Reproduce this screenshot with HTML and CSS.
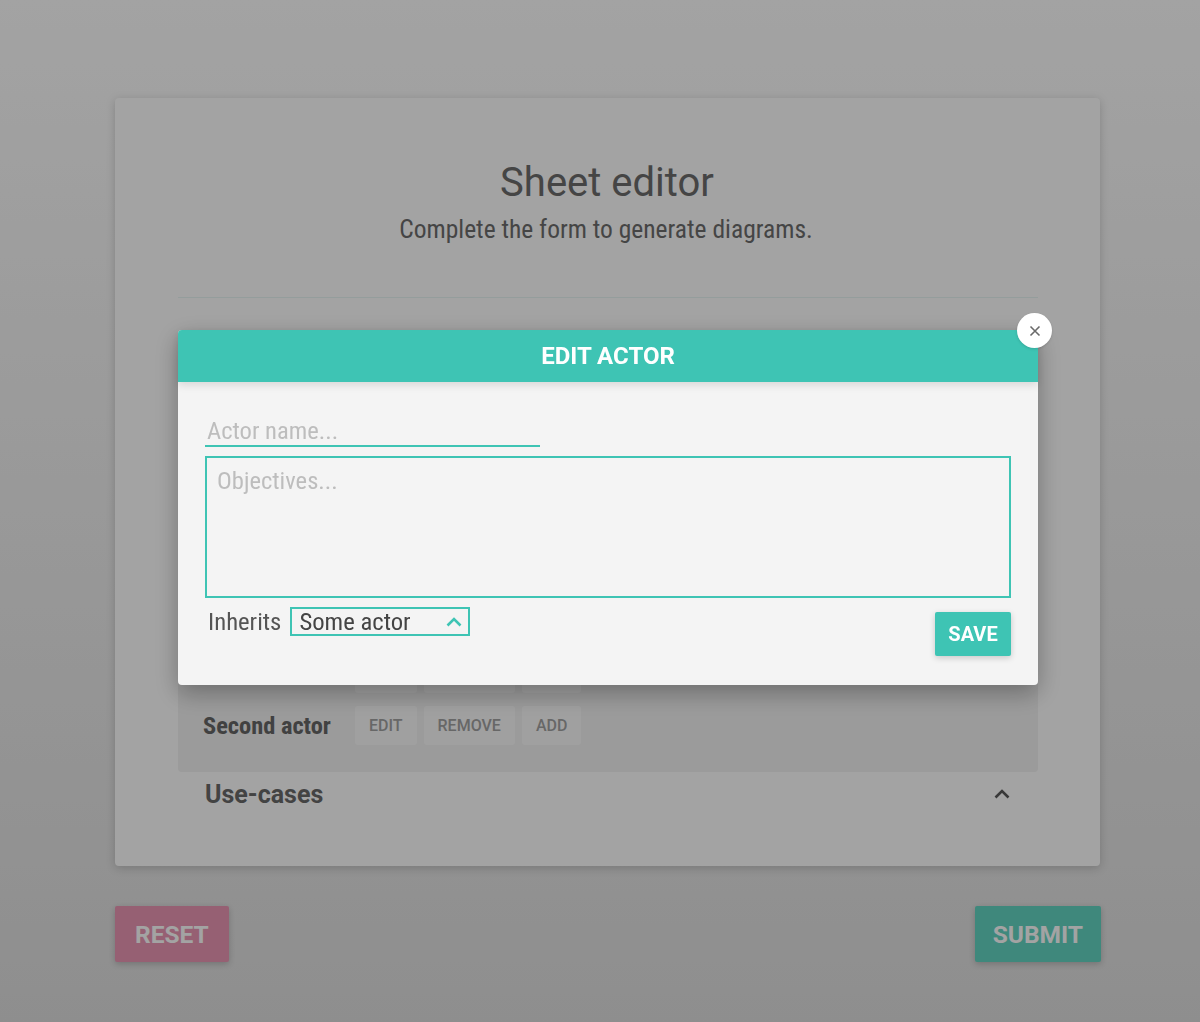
FILE: index.html
```html
<!DOCTYPE html>
<html lang="en">
<head>
<meta charset="utf-8">
<title>Sheet editor</title>
<link rel="stylesheet" href="styles.css">
</head>
<body>
<div class="page">
  <main class="card">
    <header class="card-head">
      <h1 class="title">Sheet editor</h1>
      <p class="subtitle">Complete the form to generate diagrams.</p>
    </header>
    <hr class="divider">
    <section class="general">
      <input class="line-input" placeholder="Sheet title...">
      <input class="line-input" placeholder="Author...">
    </section>
    <div class="acc-head">
      <span class="acc-title">Actors</span>
      <svg class="acc-chevron" width="16" height="10" viewBox="0 0 16 10"><polyline points="1.5,8.5 8,2 14.5,8.5" fill="none" stroke="currentColor" stroke-width="2.6"/></svg>
    </div>
    <div class="acc-panel">
      <div class="actor-row">
        <span class="actor-name">First actor</span>
        <button class="chip">EDIT</button><button class="chip">REMOVE</button><button class="chip">ADD</button>
      </div>
      <div class="actor-row">
        <span class="actor-name">Second actor</span>
        <button class="chip">EDIT</button><button class="chip">REMOVE</button><button class="chip">ADD</button>
      </div>
    </div>
    <div class="acc-head acc-last">
      <span class="acc-title">Use-cases</span>
      <svg class="acc-chevron" width="16" height="10" viewBox="0 0 16 10"><polyline points="1.5,8.5 8,2 14.5,8.5" fill="none" stroke="currentColor" stroke-width="2.6"/></svg>
    </div>
  </main>
  <div class="actions">
    <button class="big-btn btn-reset">RESET</button>
    <button class="big-btn btn-submit">SUBMIT</button>
  </div>
</div>

<div class="overlay"></div>

<div class="modal">
  <button class="modal-close" aria-label="Close">
    <svg width="12" height="12" viewBox="0 0 12 12"><path d="M1.5 1.5 L10.5 10.5 M10.5 1.5 L1.5 10.5" stroke="#6a6a6a" stroke-width="1.6" fill="none"/></svg>
  </button>
  <div class="modal-head">EDIT ACTOR</div>
  <div class="modal-body">
    <input class="name-input" placeholder="Actor name...">
    <textarea class="obj-input" placeholder="Objectives..."></textarea>
    <div class="modal-foot">
      <div class="inherits">
        <span class="inherits-label">Inherits</span>
        <div class="select">
          <span class="select-value">Some actor</span>
          <svg class="select-chevron" width="16" height="10" viewBox="0 0 16 10"><polyline points="1.5,8.5 8,2 14.5,8.5" fill="none" stroke="#3ec4b4" stroke-width="2.6"/></svg>
        </div>
      </div>
      <button class="save-btn">SAVE</button>
    </div>
  </div>
</div>
</body>
</html>
```

FILE: styles.css
```css
* { box-sizing: border-box; }

html, body {
  margin: 0;
  padding: 0;
}

body {
  min-height: 1022px;
  background: linear-gradient(to bottom, #ffffff 0%, #dfdfdf 100%);
  font-family: Roboto, "Noto Sans", sans-serif;
  color: #6b6b6b;
}

.page {
  padding-top: 98px;
  padding-bottom: 60px;
}

.card {
  margin-left: 115px;
  width: 985px;
  background: #ffffff;
  border-radius: 4px;
  box-shadow: 0 2px 10px rgba(0, 0, 0, 0.18);
  padding: 61px 62px 50px 63px;
}

.card-head {
  text-align: center;
}

.title {
  margin: 0;
  font-size: 40px;
  line-height: 48px;
  font-weight: 400;
  color: #6d6d6d;
  padding-right: 2px;
}

.subtitle {
  margin: 7px 0 0;
  font-family: "Roboto Condensed", "Liberation Sans Narrow", Roboto, sans-serif;
  font-stretch: condensed;
  font-size: 25.5px;
  line-height: 30px;
  color: #6d6d6d;
  padding-right: 4px;
}

.divider {
  margin: 53px 0 0;
  border: 0;
  height: 1px;
  background: #e8f6f4;
}

.general {
  height: 202px;
  padding: 40px 27px;
  display: flex;
  flex-direction: column;
  gap: 30px;
}

.line-input {
  height: 46px;
  width: 335px;
  border: 0;
  border-bottom: 2px solid #3ec4b4;
  background: transparent;
  font-family: "Roboto Condensed", "Liberation Sans Narrow", Roboto, sans-serif;
  font-size: 24px;
  color: #555;
  outline: none;
}

.acc-head {
  height: 50px;
  padding: 0 28px 0 27px;
  display: flex;
  align-items: center;
  justify-content: space-between;
  color: #6a6a6a;
}

.acc-last {
  height: 44px;
}

.acc-title {
  font-size: 25px;
  font-weight: 700;
  color: #6a6a6a;
}

.acc-chevron {
  color: #5a5a5a;
}

.acc-panel {
  background: #f2f2f2;
  border-radius: 0 0 4px 4px;
  padding: 104px 25px 27px;
  display: flex;
  flex-direction: column;
  gap: 13px;
}

.actor-row {
  display: flex;
  align-items: center;
  gap: 7px;
  height: 39px;
}

.actor-name {
  width: 145px;
  font-family: "Roboto Condensed", "Liberation Sans Narrow", Roboto, sans-serif;
  font-stretch: condensed;
  font-weight: 700;
  font-size: 24.4px;
  color: #666;
}

.chip {
  height: 39px;
  padding: 0 14px;
  border: 0;
  border-radius: 3px;
  background: #fbfbfb;
  font-family: Roboto, sans-serif;
  font-weight: 500;
  font-size: 16px;
  color: #a2a2a2;
}

.actions {
  margin: 40px 0 0 115px;
  width: 986px;
  display: flex;
  justify-content: space-between;
}

.big-btn {
  height: 56px;
  border: 0;
  border-radius: 2px;
  padding: 0 20px;
  font-family: Roboto, sans-serif;
  font-weight: 700;
  font-size: 24.5px;
  color: #ffffff;
  box-shadow: 0 2px 6px rgba(0, 0, 0, 0.2);
}

.btn-reset {
  background: #eb96b4;
}

.btn-submit {
  background: #63d5c3;
  padding: 0 18px;
}

.overlay {
  position: fixed;
  inset: 0;
  background: rgba(0, 0, 0, 0.36);
  z-index: 10;
}

.modal {
  position: fixed;
  left: 178px;
  top: 330px;
  width: 860px;
  background: #f4f4f4;
  border-radius: 4px;
  box-shadow: 0 8px 24px rgba(0, 0, 0, 0.3);
  z-index: 20;
}

.modal-close {
  position: absolute;
  top: -17px;
  right: -14px;
  width: 35px;
  height: 35px;
  border-radius: 50%;
  border: 0;
  background: #ffffff;
  display: flex;
  align-items: center;
  justify-content: center;
  padding: 0;
  box-shadow: 0 1px 3px rgba(0, 0, 0, 0.15);
  z-index: 2;
}

.modal-head {
  height: 52px;
  background: #3ec4b4;
  border-radius: 4px 4px 0 0;
  color: #ffffff;
  font-size: 24px;
  font-weight: 700;
  display: flex;
  align-items: center;
  justify-content: center;
  box-shadow: 0 3px 8px rgba(0, 0, 0, 0.12);
  position: relative;
  z-index: 1;
}

.modal-body {
  padding: 33px 27px 29px;
}

.name-input {
  display: block;
  width: 335px;
  height: 32px;
  border: 0;
  border-bottom: 2px solid #3ec4b4;
  background: transparent;
  padding: 0 2px;
  font-family: "Roboto Condensed", "Liberation Sans Narrow", Roboto, sans-serif;
  font-stretch: condensed;
  font-size: 24.6px;
  color: #444;
  outline: none;
}

.name-input::placeholder,
.obj-input::placeholder {
  color: #bdbdbd;
}

.obj-input {
  display: block;
  margin-top: 9px;
  width: 100%;
  height: 142px;
  border: 2px solid #3ec4b4;
  background: transparent;
  padding: 8px 10px;
  resize: none;
  font-family: "Roboto Condensed", "Liberation Sans Narrow", Roboto, sans-serif;
  font-stretch: condensed;
  font-size: 24.6px;
  line-height: 30px;
  color: #444;
  outline: none;
}

.modal-foot {
  margin-top: 9px;
  display: flex;
  justify-content: space-between;
  align-items: flex-start;
}

.inherits {
  display: flex;
  align-items: center;
  gap: 9px;
  padding-left: 3px;
}

.inherits-label {
  font-family: "Roboto Condensed", "Liberation Sans Narrow", Roboto, sans-serif;
  font-stretch: condensed;
  font-size: 24.7px;
  line-height: 29px;
  color: #555;
}

.select {
  width: 180px;
  height: 29px;
  border: 2px solid #3ec4b4;
  display: flex;
  align-items: center;
  justify-content: space-between;
  padding: 0 6px 0 7px;
}

.select-value {
  font-family: "Roboto Condensed", "Liberation Sans Narrow", Roboto, sans-serif;
  font-stretch: condensed;
  font-size: 24.7px;
  line-height: 25px;
  color: #444;
}

.save-btn {
  margin-top: 5px;
  height: 44px;
  width: 76px;
  border: 0;
  border-radius: 2px;
  background: #3ec4b4;
  color: #ffffff;
  font-family: Roboto, sans-serif;
  font-weight: 700;
  font-size: 20px;
  padding: 0;
  box-shadow: 0 2px 6px rgba(0, 0, 0, 0.18);
}
```
